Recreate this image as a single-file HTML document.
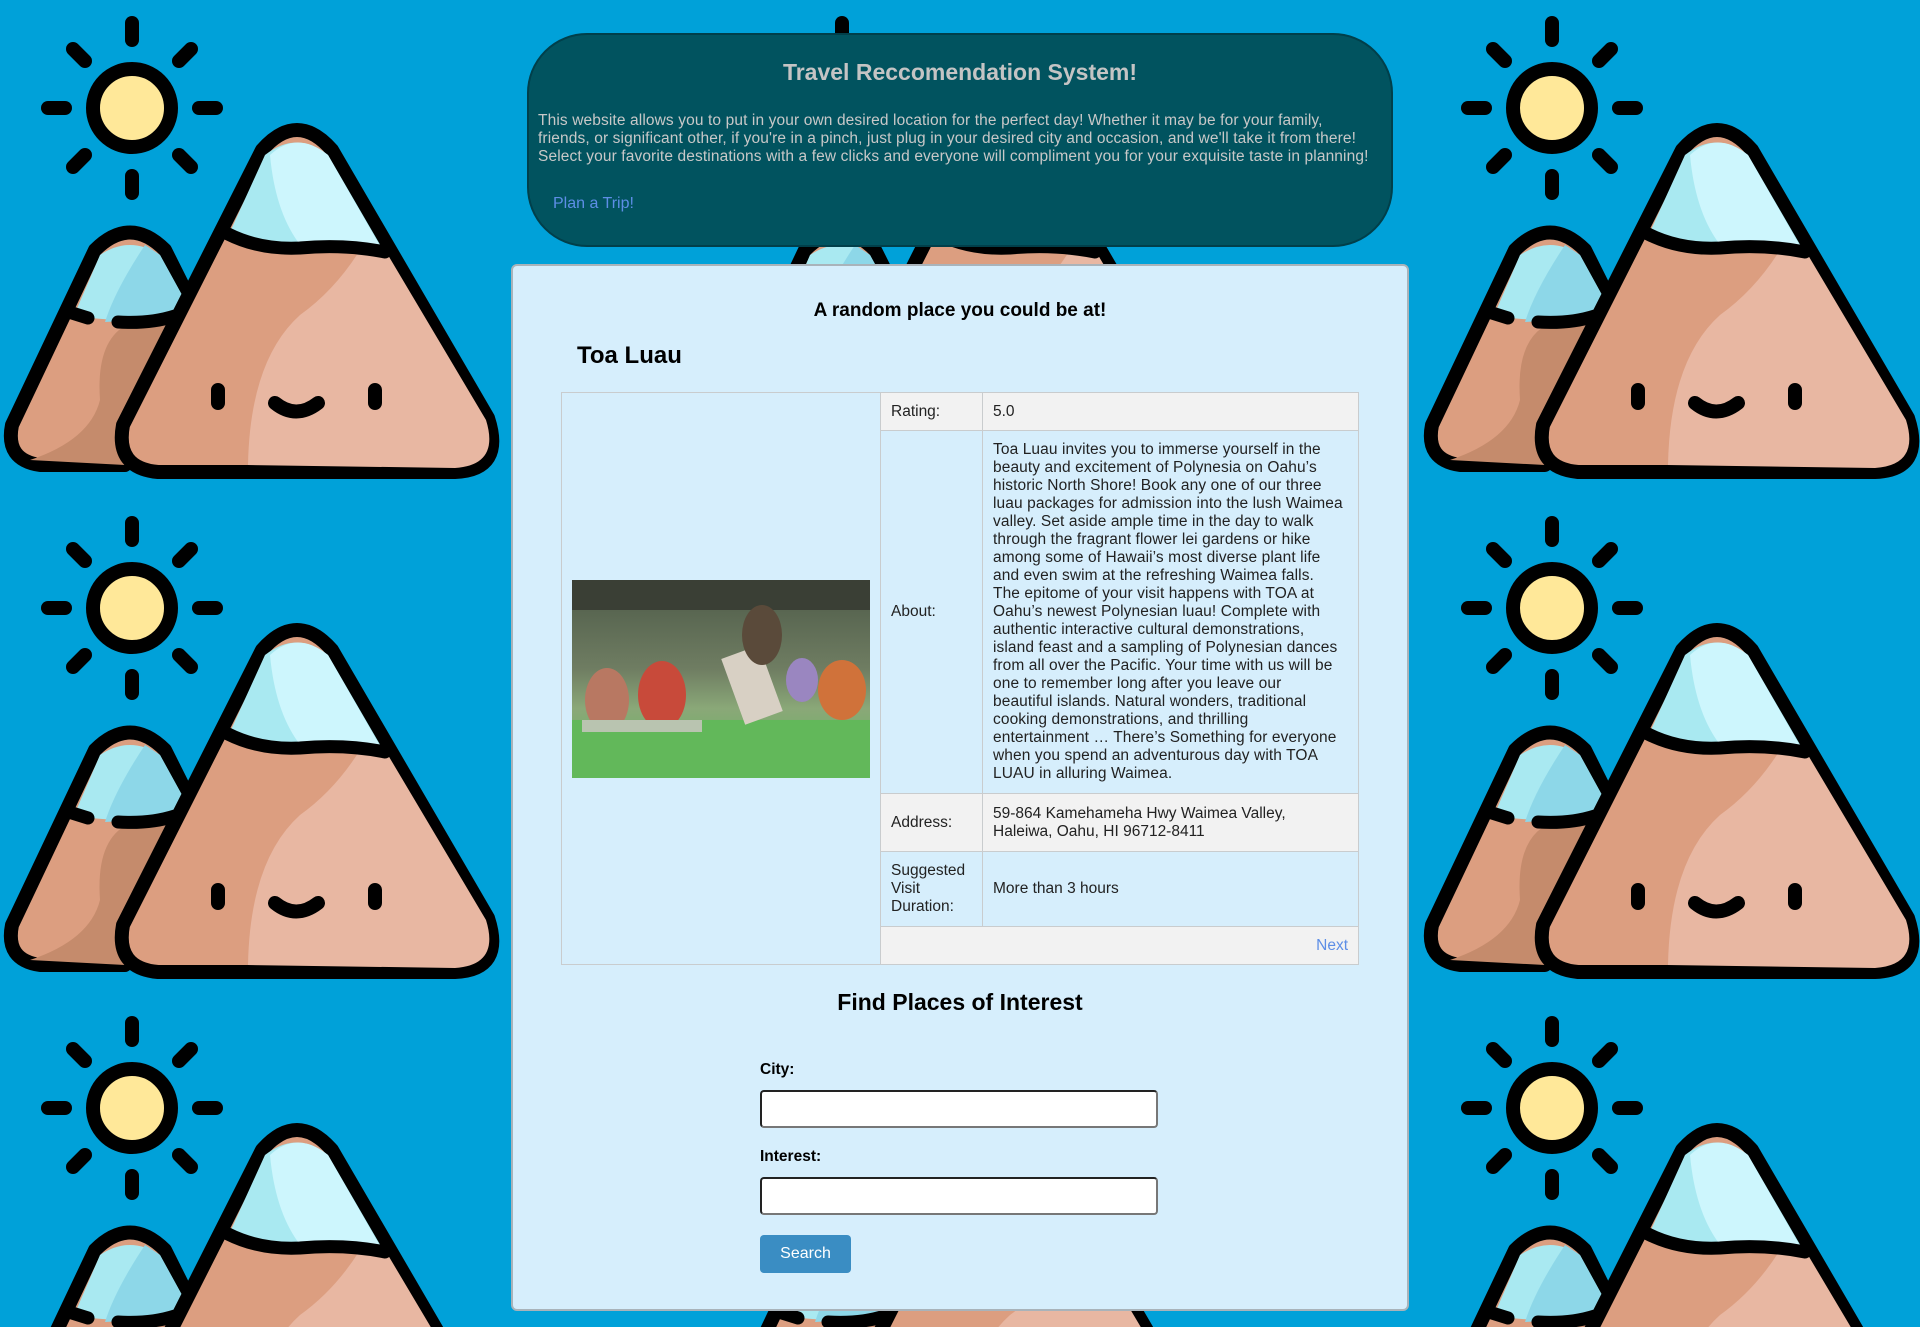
<!DOCTYPE html>
<html><head><meta charset="utf-8"><style>
*{box-sizing:border-box;margin:0;padding:0}
html,body{width:1920px;height:1327px;overflow:hidden;background:#00a1d9;font-family:"Liberation Sans",Arial,sans-serif;position:relative}
#bg{position:absolute;left:0;top:0}
.hdr{position:absolute;left:527px;top:33px;width:866px;height:214px;background:#01535f;border:2px solid #013f4a;border-radius:60px}
.hdr h1{position:absolute;left:0;right:0;top:24px;text-align:center;font-size:23px;color:#c4c4c4;font-weight:bold}
.hdr p{position:absolute;left:9px;top:77px;font-size:15.5px;line-height:18px;color:#c8c8c8;white-space:nowrap;letter-spacing:0.12px}
.hdr a{position:absolute;left:24px;top:160px;font-size:16px;color:#5d8ee6;text-decoration:none}
.panel{position:absolute;left:511px;top:264px;width:898px;height:1047px;background:#d6eefc;border:2px solid #a9b3ba;border-radius:6px}
.abs{position:absolute}
table{position:absolute;left:561px;top:392px;width:798px;border-collapse:collapse;font-size:15.5px;color:#222}
td{border:1px solid #c9ccce;padding:0 10px;vertical-align:middle}
.g td.v,.g td.l{background:#f2f2f2}
input{position:absolute;width:398px;height:38px;background:#fff;border:2px solid #222;border-bottom-color:#777;border-right-color:#777;border-radius:4px}
.btn{position:absolute;left:760px;top:1235px;width:91px;height:38px;background:#3a8dc3;border-radius:4px;color:#fff;font-size:16px;text-align:center;line-height:38px}
</style></head><body>
<svg id="bg" width="1920" height="1327" xmlns="http://www.w3.org/2000/svg">
<defs>
<g id="t">
 <g stroke="#000" stroke-width="14" stroke-linecap="round">
  <line x1="132" y1="23" x2="132" y2="40"/><line x1="132" y1="176" x2="132" y2="193"/>
  <line x1="48" y1="108" x2="65" y2="108"/><line x1="199" y1="108" x2="216" y2="108"/>
  <line x1="73" y1="49" x2="85" y2="61"/><line x1="191" y1="49" x2="179" y2="61"/>
  <line x1="73" y1="167" x2="85" y2="155"/><line x1="191" y1="167" x2="179" y2="155"/>
 </g>
 <circle cx="132" cy="108" r="39" fill="#ffe899" stroke="#000" stroke-width="14"/>
 <path d="M95 250 Q130 215 165 250 L190 300 L125 465 L40 465 Q5 460 12 425 Z" fill="#dc9e80" stroke="#000" stroke-width="14" stroke-linejoin="round"/>
 <path d="M100 400 Q95 330 140 320 L180 320 L125 465 L30 460 Q90 440 100 400Z" fill="#c58b6c"/>
 <path d="M75 313 L100 255 Q130 235 160 255 L182 295 L170 318 Q130 325 115 320 L90 318Z" fill="#a9e9f1"/>
 <path d="M145 245 Q115 290 105 322 L170 318 L182 295 L160 255Z" fill="#8dd7e8"/>
 <path d="M72 313 L88 318 M118 322 Q150 324 175 316" stroke="#000" stroke-width="13" stroke-linecap="round" fill="none"/>
 <path d="M262 150 Q297 110 332 150 L488 418 Q505 470 455 472 L158 472 Q115 468 123 425 Z" fill="#dc9e80" stroke="#000" stroke-width="14" stroke-linejoin="round"/>
 <path d="M360 250 Q335 290 300 315 Q250 360 248 465 L455 468 Q500 465 486 420 L385 250 Z" fill="#e8b7a2"/>
 <path d="M230 232 L265 155 Q297 130 328 155 L382 248 Q340 240 300 246 Q260 250 230 232Z" fill="#a9e9f1"/>
 <path d="M270 155 Q275 210 298 242 Q340 240 380 246 L328 155 Q297 130 270 155Z" fill="#cdf6fd"/>
 <path d="M228 234 Q260 250 300 248 Q345 244 385 252" stroke="#000" stroke-width="13" stroke-linecap="round" fill="none"/>
 <path d="M218 390 L218 403 M375 390 L375 403 M275 403 Q296 420 318 403" stroke="#000" stroke-width="14" stroke-linecap="round" fill="none"/>
</g>
</defs>
<use href="#t" x="0" y="0"/><use href="#t" x="0" y="500"/><use href="#t" x="0" y="1000"/>
<use href="#t" x="710" y="0"/><use href="#t" x="710" y="500"/><use href="#t" x="710" y="1000"/>
<use href="#t" x="1420" y="0"/><use href="#t" x="1420" y="500"/><use href="#t" x="1420" y="1000"/>
</svg>

<div class="hdr">
<h1>Travel Reccomendation System!</h1>
<p>This website allows you to put in your own desired location for the perfect day! Whether it may be for your family,<br>friends, or significant other, if you're in a pinch, just plug in your desired city and occasion, and we'll take it from there!<br>Select your favorite destinations with a few clicks and everyone will compliment you for your exquisite taste in planning!</p>
<a>Plan a Trip!</a>
</div>

<div class="panel"></div>
<div class="abs" style="left:512px;width:896px;top:300px;text-align:center;font-size:19px;font-weight:bold;color:#000">A random place you could be at!</div>
<div class="abs" style="left:577px;top:342px;font-size:24px;font-weight:bold;color:#000">Toa Luau</div>

<table>
<tr class="g"><td rowspan="5" style="width:319px;padding:0;text-align:center">
<svg width="298" height="198" style="display:block;margin:0 auto">
<defs><linearGradient id="gg" x1="0" y1="0" x2="0" y2="1"><stop offset="0" stop-color="#4d5a48"/><stop offset=".45" stop-color="#6f7d62"/><stop offset=".65" stop-color="#8aa878"/><stop offset="1" stop-color="#5fb45a"/></linearGradient></defs>
<rect width="298" height="198" fill="url(#gg)"/>
<rect y="0" width="298" height="30" fill="#3a3f35"/>
<rect y="140" width="298" height="58" fill="#62b85a"/>
<ellipse cx="35" cy="120" rx="22" ry="32" fill="#b87862"/>
<ellipse cx="90" cy="115" rx="24" ry="34" fill="#c84a3a"/>
<rect x="160" y="70" width="40" height="70" fill="#d8d0c4" transform="rotate(-20 180 105)"/>
<ellipse cx="190" cy="55" rx="20" ry="30" fill="#5a4a3a"/>
<ellipse cx="270" cy="110" rx="24" ry="30" fill="#d0723a"/>
<ellipse cx="230" cy="100" rx="16" ry="22" fill="#9a86c0"/>
<rect x="10" y="140" width="120" height="12" fill="#b9c4b0"/>
</svg></td>
<td class="l" style="width:102px;height:38px">Rating:</td><td class="v">5.0</td></tr>
<tr><td style="height:363px">About:</td><td style="line-height:18px;padding-right:14px;letter-spacing:0.1px">Toa Luau invites you to immerse yourself in the beauty and excitement of Polynesia on Oahu’s historic North Shore! Book any one of our three luau packages for admission into the lush Waimea valley. Set aside ample time in the day to walk through the fragrant flower lei gardens or hike among some of Hawaii’s most diverse plant life and even swim at the refreshing Waimea falls. The epitome of your visit happens with TOA at Oahu’s newest Polynesian luau! Complete with authentic interactive cultural demonstrations, island feast and a sampling of Polynesian dances from all over the Pacific. Your time with us will be one to remember long after you leave our beautiful islands. Natural wonders, traditional cooking demonstrations, and thrilling entertainment … There’s Something for everyone when you spend an adventurous day with TOA LUAU in alluring Waimea.</td></tr>
<tr class="g"><td class="l" style="height:58px">Address:</td><td class="v" style="line-height:18px">59-864 Kamehameha Hwy Waimea Valley, Haleiwa, Oahu, HI 96712-8411</td></tr>
<tr><td style="height:75px;line-height:18px">Suggested Visit Duration:</td><td>More than 3 hours</td></tr>
<tr class="g"><td colspan="2" class="v" style="height:38px;text-align:right;color:#5d8ee6">Next</td></tr>
</table>

<div class="abs" style="left:512px;width:896px;top:989px;text-align:center;font-size:23px;font-weight:bold;color:#000">Find Places of Interest</div>
<div class="abs" style="left:760px;top:1061px;font-size:15.5px;font-weight:bold;color:#000">City:</div>
<input style="left:760px;top:1090px">
<div class="abs" style="left:760px;top:1148px;font-size:15.5px;font-weight:bold;color:#000">Interest:</div>
<input style="left:760px;top:1177px">
<div class="btn">Search</div>
</body></html>
